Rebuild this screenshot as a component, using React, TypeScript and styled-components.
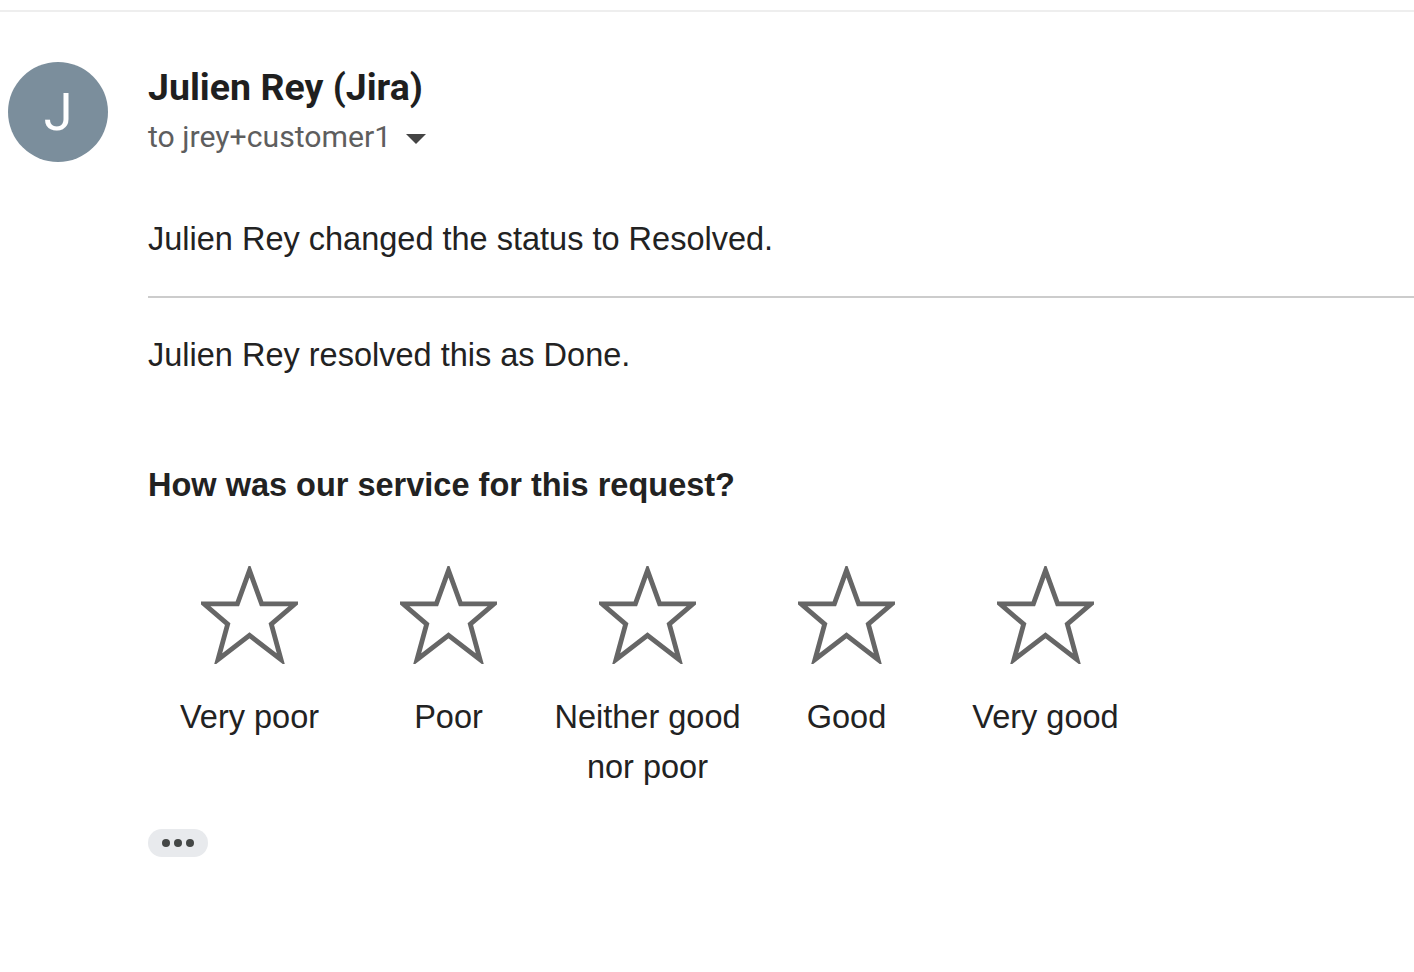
import styled, { createGlobalStyle } from "styled-components";

const GlobalStyle = createGlobalStyle`
  html, body {
    margin: 0;
    padding: 0;
    background: #ffffff;
  }
  body {
    font-family: "Liberation Sans", Arial, sans-serif;
    color: #222222;
  }
`;

const RATINGS = [
  { label: "Very poor" },
  { label: "Poor" },
  { label: "Neither good nor poor" },
  { label: "Good" },
  { label: "Very good" },
];

const Star = () => (
  <StarIcon viewBox="0 0 100 100" aria-hidden>
    <polygon
      points="50,4 62.5,38.5 97,38.5 72.5,59.5 82.5,96 50,71 17.5,96 27.5,59.5 3,38.5 37.5,38.5"
      fill="none"
      stroke="#666666"
      strokeWidth="5"
      strokeLinejoin="miter"
    />
  </StarIcon>
);

export default function App() {
  return (
    <>
      <GlobalStyle />
      <Page>
        <Message>
          <Avatar>J</Avatar>
          <Body>
            <Sender>
              <SenderName>Julien Rey (Jira)</SenderName>
              <Recipient>
                to jrey+customer1
                <Caret viewBox="0 0 20 10" aria-hidden>
                  <path d="M0 0 L20 0 L10 10 Z" fill="#444444" />
                </Caret>
              </Recipient>
            </Sender>
            <Paragraph $top={55}>Julien Rey changed the status to Resolved.</Paragraph>
            <Divider />
            <Paragraph $top={32}>Julien Rey resolved this as Done.</Paragraph>
            <Question>How was our service for this request?</Question>
            <Ratings>
              {RATINGS.map((r) => (
                <Rating key={r.label}>
                  <Star />
                  <RatingLabel>{r.label}</RatingLabel>
                </Rating>
              ))}
            </Ratings>
            <MoreButton aria-label="Show trimmed content">
              <Dot />
              <Dot />
              <Dot />
            </MoreButton>
          </Body>
        </Message>
      </Page>
    </>
  );
}

const Page = styled.div`
  padding-top: 10px;
  min-height: 972px;
  box-sizing: border-box;
`;

const Message = styled.div`
  border-top: 2px solid #eeeeee;
  display: flex;
  align-items: flex-start;
  gap: 40px;
  padding: 50px 0 0 8px;
`;

const Avatar = styled.div`
  flex: none;
  width: 100px;
  height: 100px;
  border-radius: 50%;
  background: #7b8e9c;
  color: #ffffff;
  display: flex;
  align-items: center;
  justify-content: center;
  font-family: Roboto, "Liberation Sans", sans-serif;
  font-size: 52px;
  font-weight: 400;
`;

const Body = styled.div`
  flex: 1;
  min-width: 0;
  display: flex;
  flex-direction: column;
  align-items: flex-start;
`;

const Sender = styled.div`
  display: flex;
  flex-direction: column;
  padding-top: 2px;
`;

const SenderName = styled.div`
  font-family: Roboto, "Liberation Sans", sans-serif;
  font-weight: 700;
  font-size: 37.5px;
  line-height: 46px;
  color: #1f1f1f;
`;

const Recipient = styled.div`
  display: flex;
  align-items: center;
  gap: 15px;
  margin-top: 5px;
  font-family: Roboto, "Liberation Sans", sans-serif;
  font-size: 30.2px;
  line-height: 44px;
  color: #5e5e5e;
`;

const Caret = styled.svg`
  width: 20px;
  height: 10px;
  margin-top: 4px;
`;

const Paragraph = styled.p<{ $top: number }>`
  margin: ${({ $top }) => $top}px 0 0;
  font-size: 32.5px;
  line-height: 50px;
  color: #222222;
`;

const Divider = styled.hr`
  align-self: stretch;
  margin: 32px 0 0;
  border: none;
  border-top: 2px solid #cccccc;
`;

const Question = styled.h2`
  margin: 80px 0 0;
  font-size: 32.5px;
  font-weight: 700;
  line-height: 50px;
  color: #222222;
`;

const Ratings = styled.div`
  display: grid;
  grid-template-columns: repeat(5, 199px);
  margin: 56px 0 0 2px;
`;

const Rating = styled.div`
  display: flex;
  flex-direction: column;
  align-items: center;
  text-align: center;
`;

const StarIcon = styled.svg`
  width: 97px;
  height: 98px;
`;

const RatingLabel = styled.div`
  font-size: 32.5px;
  line-height: 50px;
  color: #222222;
  margin-top: 28px;
`;

const MoreButton = styled.button`
  margin-top: 37px;
  width: 60px;
  height: 28px;
  border: none;
  border-radius: 14px;
  background: #e8eaed;
  display: flex;
  align-items: center;
  justify-content: center;
  gap: 4px;
  padding: 0;
  cursor: pointer;
`;

const Dot = styled.span`
  width: 8px;
  height: 8px;
  border-radius: 50%;
  background: #444746;
`;
